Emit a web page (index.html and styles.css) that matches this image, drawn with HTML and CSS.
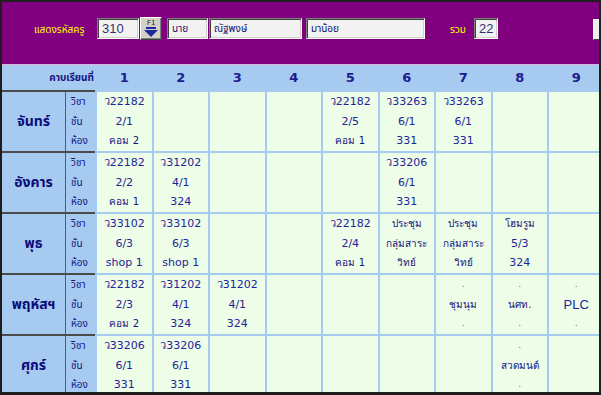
FILE: index.html
```html
<!DOCTYPE html>
<html lang="th">
<head>
<meta charset="utf-8">
<title>ตารางสอน</title>
<link rel="stylesheet" href="styles.css">
</head>
<body>
<div class="window">
  <div class="toolbar">
    <span class="tlabel tl-teacher">แสดงรหัสครู</span>
    <div class="field f-code">310</div>
    <div class="btn-f1"><span class="f1-text">F1</span><svg class="f1-arrow" width="16" height="11" viewBox="0 0 16 11"><rect x="3" y="0" width="10" height="2" fill="#1a2a9c"/><polygon points="1,3 15,3 8,10" fill="#1a2a9c"/></svg></div>
    <div class="field f-title">นาย</div>
    <div class="field f-first">ณัฐพงษ์</div>
    <div class="field f-last">มาน้อย</div>
    <span class="tlabel tl-total">รวม</span>
    <div class="field f-total">22</div>
    <div class="btn-edge"></div>
  </div>

  <div class="grid">
    <div class="head-title">คาบเรียนที่</div>
    <div class="head-num">1</div><div class="head-num">2</div><div class="head-num">3</div>
    <div class="head-num">4</div><div class="head-num">5</div><div class="head-num">6</div>
    <div class="head-num">7</div><div class="head-num">8</div><div class="head-num">9</div>

    <!-- Monday -->
    <div class="day"><div class="day-name">จันทร์</div><div class="labels"><span>วิชา</span><span>ชั้น</span><span>ห้อง</span></div></div>
    <div class="cell"><span>ว22182</span><span>2/1</span><span class="th">คอม 2</span></div>
    <div class="cell"></div>
    <div class="cell"></div>
    <div class="cell"></div>
    <div class="cell"><span>ว22182</span><span>2/5</span><span class="th">คอม 1</span></div>
    <div class="cell"><span>ว33263</span><span>6/1</span><span>331</span></div>
    <div class="cell"><span>ว33263</span><span>6/1</span><span>331</span></div>
    <div class="cell"></div>
    <div class="cell"></div>

    <!-- Tuesday -->
    <div class="day"><div class="day-name">อังคาร</div><div class="labels"><span>วิชา</span><span>ชั้น</span><span>ห้อง</span></div></div>
    <div class="cell"><span>ว22182</span><span>2/2</span><span class="th">คอม 1</span></div>
    <div class="cell"><span>ว31202</span><span>4/1</span><span>324</span></div>
    <div class="cell"></div>
    <div class="cell"></div>
    <div class="cell"></div>
    <div class="cell"><span>ว33206</span><span>6/1</span><span>331</span></div>
    <div class="cell"></div>
    <div class="cell"></div>
    <div class="cell"></div>

    <!-- Wednesday -->
    <div class="day"><div class="day-name">พุธ</div><div class="labels"><span>วิชา</span><span>ชั้น</span><span>ห้อง</span></div></div>
    <div class="cell"><span>ว33102</span><span>6/3</span><span>shop 1</span></div>
    <div class="cell"><span>ว33102</span><span>6/3</span><span>shop 1</span></div>
    <div class="cell"></div>
    <div class="cell"></div>
    <div class="cell"><span>ว22182</span><span>2/4</span><span class="th">คอม 1</span></div>
    <div class="cell"><span class="th">ประชุม</span><span class="th">กลุ่มสาระ</span><span class="th">วิทย์</span></div>
    <div class="cell"><span class="th">ประชุม</span><span class="th">กลุ่มสาระ</span><span class="th">วิทย์</span></div>
    <div class="cell"><span class="th">โฮมรูม</span><span>5/3</span><span>324</span></div>
    <div class="cell"></div>

    <!-- Thursday -->
    <div class="day"><div class="day-name">พฤหัสฯ</div><div class="labels"><span>วิชา</span><span>ชั้น</span><span>ห้อง</span></div></div>
    <div class="cell"><span>ว22182</span><span>2/3</span><span class="th">คอม 2</span></div>
    <div class="cell"><span>ว31202</span><span>4/1</span><span>324</span></div>
    <div class="cell"><span>ว31202</span><span>4/1</span><span>324</span></div>
    <div class="cell"></div>
    <div class="cell"></div>
    <div class="cell"></div>
    <div class="cell"><span class="dot">.</span><span class="th">ชุมนุม</span><span class="dot">.</span></div>
    <div class="cell"><span class="dot">.</span><span class="th">นศท.</span><span class="dot">.</span></div>
    <div class="cell"><span class="dot">.</span><span class="big">PLC</span><span class="dot">.</span></div>

    <!-- Friday -->
    <div class="day"><div class="day-name">ศุกร์</div><div class="labels"><span>วิชา</span><span>ชั้น</span><span>ห้อง</span></div></div>
    <div class="cell"><span>ว33206</span><span>6/1</span><span>331</span></div>
    <div class="cell"><span>ว33206</span><span>6/1</span><span>331</span></div>
    <div class="cell"></div>
    <div class="cell"></div>
    <div class="cell"></div>
    <div class="cell"></div>
    <div class="cell"></div>
    <div class="cell"><span class="dot">.</span><span class="th">สวดมนต์</span><span class="dot">.</span></div>
    <div class="cell"></div>
  </div>
</div>
</body>
</html>
```

FILE: styles.css
```css
* { box-sizing: border-box; }

html, body {
  margin: 0;
  padding: 0;
  background: #ffffff;
}

body {
  font-family: Tahoma, "DejaVu Sans", "Noto Sans Thai", "Noto Sans", sans-serif;
  color: #1c1c8e;
}

.window {
  width: 601px;
  height: 395px;
  border-style: solid;
  border-color: #1e1e1e;
  border-width: 2px 2px 3px 2px;
  background: #a6caf0;
  overflow: hidden;
}

/* ---------- toolbar ---------- */
.toolbar {
  height: 63px;
  background: #800080;
  border-bottom: 1px solid #dcb4dc;
  display: flex;
  align-items: flex-start;
  padding: 16px 0 0 32px;
  white-space: nowrap;
}

.toolbar > * { flex-shrink: 0; }

.tlabel {
  color: #ffff00;
  font-size: 10px;
  line-height: 21px;
  height: 21px;
  margin-top: 1px;
}

.tl-teacher { width: 58px; }
.tl-total { width: 18px; margin-left: 25px; }

.field {
  height: 21px;
  background: #f2f2f2;
  border: 1px solid;
  border-color: #808080 #ffffff #ffffff #808080;
  box-shadow: inset 1px 1px 0 #404040, inset -1px -1px 0 #d4d0c8;
  font-size: 10px;
  line-height: 19px;
  padding-left: 4px;
  color: #10106a;
  overflow: hidden;
}

.f-code {
  width: 42px;
  margin-left: 5px;
  font-family: "Liberation Sans", Arial, sans-serif;
  font-size: 13px;
  color: #34346e;
}

.f-title { width: 41px; margin-left: 5px; }
.f-first { width: 93px; margin-left: 1px; }
.f-last { width: 119px; margin-left: 4px; }

.f-total {
  width: 24px;
  margin-left: 6px;
  font-family: "Liberation Sans", Arial, sans-serif;
  font-size: 13px;
  color: #34346e;
}

.btn-f1 {
  width: 22px;
  height: 23px;
  margin-top: -1px;
  margin-left: 1px;
  background: #d4d0c8;
  border: 1px solid;
  border-color: #ffffff #404040 #404040 #ffffff;
  box-shadow: inset -1px -1px 0 #808080;
  display: flex;
  flex-direction: column;
  align-items: center;
  padding-top: 1px;
}

.f1-text {
  font-family: "DejaVu Sans Mono", monospace;
  font-size: 7px;
  line-height: 8px;
  color: #202020;
}

.f1-arrow { display: block; }

.btn-edge {
  width: 14px;
  height: 21px;
  margin-top: 1px;
  margin-left: 95px;
  background: #eeeeee;
  border: 1px solid;
  border-color: #ffffff #404040 #404040 #ffffff;
}

/* ---------- timetable grid ---------- */
.grid {
  display: grid;
  grid-template-columns: 93px repeat(9, 54.5px);
  grid-template-rows: 25px repeat(5, 59px);
  gap: 2px;
  background: linear-gradient(to right, #4a4a4a 0, #4a4a4a 93px, #a6caf0 93px);
}

.head-title {
  background: #a6caf0;
  font-size: 10px;
  font-weight: bold;
  text-align: right;
  line-height: 25px;
  padding-right: 1px;
  color: #14147e;
}

.head-num {
  background: #a6caf0;
  font-family: "DejaVu Sans", sans-serif;
  font-size: 13px;
  font-weight: bold;
  text-align: center;
  line-height: 25px;
  color: #1c1c8e;
}

.day {
  display: flex;
  background: #a6caf0;
}

.day-name {
  width: 64px;
  border-right: 1px solid #5a5a5a;
  display: flex;
  align-items: center;
  justify-content: center;
  font-size: 14px;
  font-weight: bold;
  color: #0c0c78;
}

.labels {
  flex: 1;
  display: flex;
  flex-direction: column;
  justify-content: center;
  padding-left: 5px;
  font-size: 10px;
  line-height: 19.5px;
  color: #14147e;
}

.cell {
  background: #edfde8;
  display: flex;
  flex-direction: column;
  justify-content: center;
  align-items: center;
  font-family: "DejaVu Sans", sans-serif;
  font-size: 11px;
  line-height: 19.5px;
  color: #24249a;
  white-space: nowrap;
}

.cell .th {
  font-size: 10px;
  color: #14147e;
}

.cell .dot {
  font-size: 9px;
  color: #6a6aa0;
}

.cell .big {
  font-family: "Liberation Sans", Arial, sans-serif;
  font-size: 13px;
  color: #24249a;
}
```
